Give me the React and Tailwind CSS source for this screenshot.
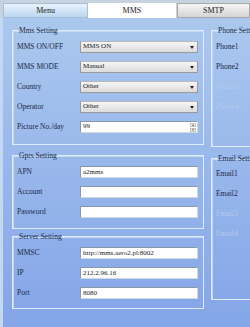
import React from 'react'

const font = { fontFamily: "'Liberation Serif', 'Times New Roman', serif" }

function Select({ value }) {
  return (
    <div className="relative flex h-[12px] w-[118px] items-center border border-[#9a9a9a] border-t-[#b8b8b8] bg-gradient-to-b from-[#f6f6f6] to-[#dcdcdc] pl-[2px] text-[7px] leading-none text-[#222]">
      {value}
      <span className="absolute right-[3px] top-[4px] h-0 w-0 border-x-[2px] border-t-[3px] border-x-transparent border-t-[#222]" />
    </div>
  )
}

function Input({ value = '', spin }) {
  return (
    <div className="relative flex h-[12px] w-[118px] items-center border border-[#8898a8] border-b-[#d0d8e0] border-r-[#d0d8e0] bg-white pl-[2px] text-[7px] leading-none text-[#222]">
      {value}
      {spin && (
        <div className="absolute right-[1px] top-[1px] flex flex-col gap-[1px]">
          <span className="flex h-[4px] w-[6px] items-center justify-center border border-[#c4c4c4] bg-[#eee]">
            <span className="h-0 w-0 border-x-[1.5px] border-b-[2px] border-x-transparent border-b-[#666]" />
          </span>
          <span className="flex h-[4px] w-[6px] items-center justify-center border border-[#c4c4c4] bg-[#eee]">
            <span className="h-0 w-0 border-x-[1.5px] border-t-[2px] border-x-transparent border-t-[#666]" />
          </span>
        </div>
      )}
    </div>
  )
}

function Row({ label, children, faded }) {
  return (
    <div className="flex h-[20px] items-center">
      <span className={`w-[63px] text-[7.5px] leading-none ${faded ? 'text-[#b4cbed]' : 'text-[#1c2845]'}`}>{label}</span>
      {children}
    </div>
  )
}

function Group({ title, className = '', children }) {
  return (
    <fieldset className={`border border-[#dfebf9] shadow-[inset_1px_1px_0_#c2d7f2] pl-[4px] pr-[5px] ${className}`}>
      <legend className="ml-[2px] px-0 text-[7.5px] leading-[9px] text-[#1c2845]">{title}</legend>
      {children}
    </fieldset>
  )
}

export default function App() {
  return (
    <div className="flex h-[327px] w-[250px] flex-col overflow-hidden bg-gradient-to-b from-[#adcaee] to-[#84a5e8]" style={font}>
      {/* tab strip */}
      <div className="flex h-[18px] shrink-0 bg-[#c6d3df] pl-[3px] pt-[3px]">
        <div className="flex w-[93px] items-center justify-center border border-[#a6bed6] bg-gradient-to-b from-[#e8f2fb] to-[#bcd6f0] text-[8px] text-[#1a1a1a]">Menu</div>
        <div className="flex w-[96px] items-center justify-center bg-white text-[8px] text-[#1a1a1a]">MMS</div>
        <div className="ml-[1px] flex w-[80px] items-center justify-center border border-[#a8a8a8] bg-gradient-to-b from-[#f6f6f6] to-[#d4d4d4] text-[8px] text-[#1a1a1a]">SMTP</div>
      </div>

      <div className="flex flex-1 border-l-[3px] border-[#c3d8f2] pl-[9px] pt-[7.5px]">
        {/* left column */}
        <div className="flex w-[192px] shrink-0 flex-col">
          <Group title="Mms Setting" className="pt-[2px] pb-[7px]">
            <Row label="MMS ON/OFF"><Select value="MMS ON" /></Row>
            <Row label="MMS MODE"><Select value="Manual" /></Row>
            <Row label="Country"><Select value="Other" /></Row>
            <Row label="Operator"><Select value="Other" /></Row>
            <Row label="Picture No./day"><Input value="99" spin /></Row>
          </Group>
          <Group title="Gprs Setting" className="mt-[6.5px] pt-[2px] pb-[6px]">
            <Row label="APN"><Input value="a2mms" /></Row>
            <Row label="Account"><Input /></Row>
            <Row label="Password"><Input /></Row>
          </Group>
          <Group title="Server Setting" className="mt-[2.5px] pt-[2.5px] pb-[5px]">
            <Row label="MMSC"><Input value="http://mms.aero2.pl:8002" /></Row>
            <Row label="IP"><Input value="212.2.96.16" /></Row>
            <Row label="Port"><Input value="8080" /></Row>
          </Group>
        </div>

        {/* right column */}
        <div className="ml-[7px] flex w-[100px] shrink-0 flex-col">
          <Group title="Phone Setting" className="pt-[2px] pb-[29px]">
            <Row label="Phone1" />
            <Row label="Phone2" />
            <Row label="Phone3" faded />
            <Row label="Phone4" faded />
          </Group>
          <Group title="Email Setting" className="mt-[7.5px] pt-[1px] pb-[55px]">
            <Row label="Email1" />
            <Row label="Email2" />
            <Row label="Email3" faded />
            <Row label="Email4" faded />
          </Group>
        </div>
      </div>
    </div>
  )
}
